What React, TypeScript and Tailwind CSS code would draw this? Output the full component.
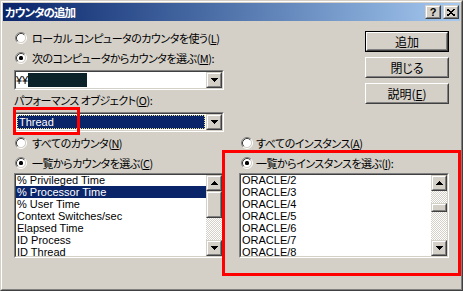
import React from "react";

const JPB = "font-['Noto_Sans_CJK_JP',sans-serif] [font-feature-settings:'palt'] text-[12px] text-black";
const JP = "font-['Noto_Sans_CJK_JP',sans-serif] [font-feature-settings:'palt'] text-[11px] tracking-[-0.5px] text-black";
const LAT = "font-['Liberation_Sans',Arial,sans-serif] text-[11px]";

function Arrow({ dir }: { dir: "up" | "down" }) {
  const rows = dir === "down" ? [0, 1, 2, 3] : [3, 2, 1, 0];
  return (
    <svg width="7" height="4" viewBox="0 0 7 4" shapeRendering="crispEdges">
      {rows.map((r, i) => (
        <rect key={i} x={r} y={i} width={7 - 2 * r} height={1} fill="#000" />
      ))}
    </svg>
  );
}

function Radio({ checked }: { checked?: boolean }) {
  return (
    <svg width="12" height="12" viewBox="0 0 12 12" className="shrink-0">
      <circle cx="6" cy="6" r="4.5" fill="#fff" />
      <path d="M2.11 9.89 A5.5 5.5 0 0 1 9.89 2.11" stroke="#808080" strokeWidth="1" fill="none" />
      <path d="M9.89 2.11 A5.5 5.5 0 0 1 2.11 9.89" stroke="#ffffff" strokeWidth="1" fill="none" />
      <path d="M2.82 9.18 A4.5 4.5 0 0 1 9.18 2.82" stroke="#404040" strokeWidth="1" fill="none" />
      <path d="M9.18 2.82 A4.5 4.5 0 0 1 2.82 9.18" stroke="#d4d0c8" strokeWidth="1" fill="none" />
      {checked && <rect x="4" y="4" width="4" height="4" rx="1.5" fill="#000" />}
    </svg>
  );
}

function Bevel({ className = "", children }: { className?: string; children?: React.ReactNode }) {
  return (
    <div className={`border border-t-[#d4d0c8] border-l-[#d4d0c8] border-r-[#404040] border-b-[#404040] bg-[#d4d0c8] ${className}`}>
      <div className="h-full w-full border border-t-white border-l-white border-r-[#808080] border-b-[#808080] flex items-center justify-center">
        {children}
      </div>
    </div>
  );
}

function PushButton({ children, def }: { children: React.ReactNode; def?: boolean }) {
  const inner = (
    <div className="h-full w-full border border-t-white border-l-white border-r-[#404040] border-b-[#404040]">
      <div className={`h-full w-full border border-t-[#d4d0c8] border-l-[#d4d0c8] border-r-[#808080] border-b-[#808080] flex items-center justify-center ${JPB}`}>
        {children}
      </div>
    </div>
  );
  return (
    <div className={`w-[84px] h-[21px] ${def ? "border border-black" : ""}`}>{inner}</div>
  );
}

function Sunken({ className = "", children }: { className?: string; children?: React.ReactNode }) {
  return (
    <div className={`border border-t-[#808080] border-l-[#808080] border-r-white border-b-white ${className}`}>
      <div className="h-full w-full border border-t-[#404040] border-l-[#404040] border-r-[#d4d0c8] border-b-[#d4d0c8] bg-white flex overflow-hidden">
        {children}
      </div>
    </div>
  );
}

const Track = ({ h }: { h: string }) => (
  <div className={`${h} w-full bg-[image:repeating-conic-gradient(#d4d0c8_0%_25%,#ffffff_0%_50%)] bg-[length:2px_2px]`} />
);

function RadioRow({ checked, children, indent, gap }: { checked?: boolean; children: React.ReactNode; indent: string; gap: string }) {
  return (
    <div className={`h-[16px] flex items-center ${indent} ${gap}`}>
      <Radio checked={checked} />
      <span className={`${JP} leading-[16px] whitespace-nowrap`}>{children}</span>
    </div>
  );
}

const counters = [
  "% Privileged Time",
  "% Processor Time",
  "% User Time",
  "Context Switches/sec",
  "Elapsed Time",
  "ID Process",
  "ID Thread",
];
const instances = ["ORACLE/2", "ORACLE/3", "ORACLE/4", "ORACLE/5", "ORACLE/6", "ORACLE/7", "ORACLE/8"];

export default function App() {
  return (
    <div className="w-[463px] h-[291px] relative bg-[#d4d0c8] border border-t-[#d4d0c8] border-l-[#d4d0c8] border-r-[#404040] border-b-[#404040] overflow-hidden">
      <div className="h-full border border-t-white border-l-white border-r-[#808080] border-b-[#808080] p-px flex flex-col">
        {/* Title bar */}
        <div className="h-[18px] bg-linear-to-r from-[#0a246a] to-[#a6caf0] flex items-center pl-[2px] pr-[1px]">
          <span className="font-['Noto_Sans_CJK_JP',sans-serif] [font-feature-settings:'palt'] text-[11.5px] tracking-[-1px] font-bold text-white leading-[18px] flex-1">
            カウンタの追加
          </span>
          <Bevel className="w-[16px] h-[14px]">
            <span className="font-['Liberation_Sans',Arial,sans-serif] text-[11px] font-bold leading-none text-black">?</span>
          </Bevel>
          <Bevel className="w-[16px] h-[14px] ml-[2px]">
            <svg width="8" height="7" viewBox="0 0 8 7" shapeRendering="crispEdges">
              <path d="M0 0 L8 7 M8 0 L0 7" stroke="#000" strokeWidth="1.6" />
            </svg>
          </Bevel>
        </div>

        {/* Body */}
        <div className="pl-[11px] flex flex-col">
          <div className="flex items-start">
            <div className="w-[210px] flex flex-col">
              <div className="mt-[9px]">
                <RadioRow indent="ml-[1px]" gap="gap-[5px]">
                  ローカル コンピュータのカウンタを使う(<span className="underline">L</span>)
                </RadioRow>
              </div>
              <div className="mt-[4px]">
                <RadioRow checked indent="ml-[1px]" gap="gap-[5px]">
                  次のコンピュータからカウンタを選ぶ(<span className="underline">M</span>):
                </RadioRow>
              </div>
              <Sunken className="mt-[4px] h-[20px] w-[210px]">
                <div className="flex-1 flex items-center">
                  <span className={`${LAT} w-[12px] leading-[14px] whitespace-nowrap text-black`}>¥¥</span>
                  <span className="w-[59px] h-[14px] bg-[#0b2228]" />
                </div>
                <Bevel className="w-[16px] h-[16px]">
                  <Arrow dir="down" />
                </Bevel>
              </Sunken>
              <div className={`mt-[3px] h-[14px] leading-[14px] whitespace-nowrap ${JP}`}>
                パフォーマンス オブジェクト(<span className="underline">O</span>):
              </div>
              <Sunken className="mt-[5px] h-[20px] w-[210px]">
                <div className="flex-1 p-px">
                  <div className="h-full bg-[#0a246a] border border-dotted border-[#e8df8c] flex items-center pl-px">
                    <span className={`${LAT} text-white leading-[14px]`}>Thread</span>
                  </div>
                </div>
                <Bevel className="w-[16px] h-[16px]">
                  <Arrow dir="down" />
                </Bevel>
              </Sunken>
            </div>
            <div className="ml-[141px] mt-[10px] flex flex-col gap-[5px]">
              <PushButton def>追加</PushButton>
              <PushButton>閉じる</PushButton>
              <PushButton>
                説明(<span className="underline">E</span>)
              </PushButton>
            </div>
          </div>

          <div className="flex gap-[15px] mt-[3px]">
            <div className="w-[210px] flex flex-col">
              <RadioRow indent="ml-[1px]" gap="gap-[5px]">
                すべてのカウンタ(<span className="underline">N</span>)
              </RadioRow>
              <div className="mt-[4px]">
                <RadioRow checked indent="ml-[1px]" gap="gap-[5px]">
                  一覧からカウンタを選ぶ(<span className="underline">C</span>)
                </RadioRow>
              </div>
              <Sunken className="mt-[2px] h-[85px] w-[210px]">
                <div className="flex-1 flex flex-col -mt-[1px]">
                  {counters.map((c, i) => (
                    <div
                      key={c}
                      className={`h-[12px] shrink-0 leading-[12px] pl-px whitespace-nowrap ${LAT} ${i === 1 ? "bg-[#0a246a] text-white" : "text-black"}`}
                    >
                      {c}
                    </div>
                  ))}
                </div>
                <div className="w-[16px] flex flex-col">
                  <Bevel className="w-[16px] h-[16px] shrink-0">
                    <Arrow dir="up" />
                  </Bevel>
                  <Bevel className="w-[16px] h-[27px] shrink-0" />
                  <Track h="h-[22px]" />
                  <Bevel className="w-[16px] h-[16px] shrink-0">
                    <Arrow dir="down" />
                  </Bevel>
                </div>
              </Sunken>
            </div>
            <div className="w-[210px] flex flex-col">
              <RadioRow indent="ml-[2px]" gap="gap-[3px]">
                すべてのインスタンス(<span className="underline">A</span>)
              </RadioRow>
              <div className="mt-[4px]">
                <RadioRow checked indent="ml-[2px]" gap="gap-[3px]">
                  一覧からインスタンスを選ぶ(<span className="underline">I</span>):
                </RadioRow>
              </div>
              <Sunken className="mt-[2px] h-[85px] w-[210px]">
                <div className="flex-1 flex flex-col -mt-[1px]">
                  {instances.map((c) => (
                    <div key={c} className={`h-[12px] shrink-0 leading-[12px] pl-px text-black ${LAT}`}>
                      {c}
                    </div>
                  ))}
                </div>
                <div className="w-[16px] flex flex-col">
                  <Bevel className="w-[16px] h-[16px] shrink-0">
                    <Arrow dir="up" />
                  </Bevel>
                  <Track h="h-[12px]" />
                  <Bevel className="w-[16px] h-[9px] shrink-0" />
                  <Track h="h-[28px]" />
                  <Bevel className="w-[16px] h-[16px] shrink-0">
                    <Arrow dir="down" />
                  </Bevel>
                </div>
              </Sunken>
            </div>
          </div>
        </div>
      </div>

      {/* Red annotation boxes */}
      <div className="absolute left-[12px] top-[106px] w-[67px] h-[28px] border-[3px] border-[#ff0000] pointer-events-none" />
      <div className="absolute left-[221px] top-[149px] w-[239px] h-[126px] border-[3px] border-[#ff0000] pointer-events-none" />
    </div>
  );
}
